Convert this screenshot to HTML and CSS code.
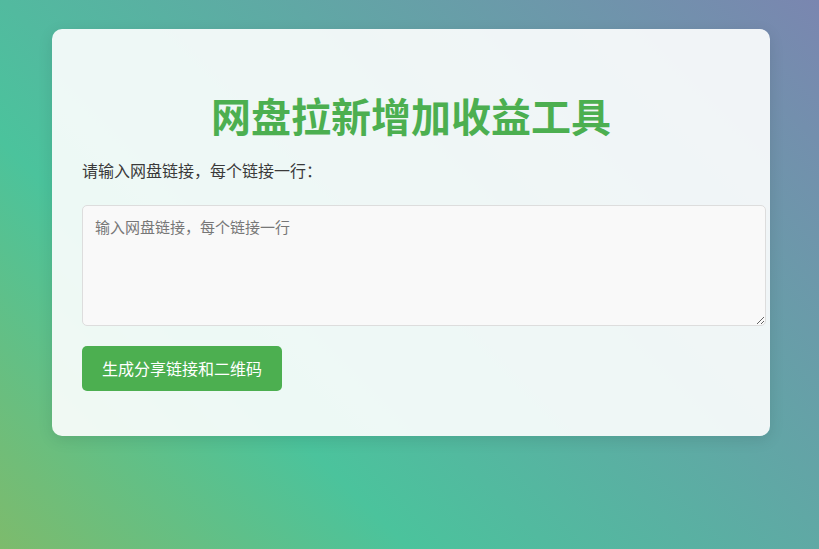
FILE: index.html
```html
<!DOCTYPE html>
<html lang="zh-CN">
<head>
<meta charset="utf-8">
<title>网盘拉新增加收益工具</title>
<link rel="stylesheet" href="styles.css">
</head>
<body>
  <div class="card">
    <h1 class="title">网盘拉新增加收益工具</h1>
    <p class="label">请输入网盘链接，每个链接一行：</p>
    <textarea class="links" placeholder="输入网盘链接，每个链接一行"></textarea>
    <button class="btn" type="button">生成分享链接和二维码</button>
  </div>
</body>
</html>
```

FILE: styles.css
```css
html, body {
  margin: 0;
  padding: 0;
  height: 100%;
}
body {
  font-family: "Noto Sans CJK SC", "Noto Sans", "Liberation Sans", sans-serif;
  background: linear-gradient(45deg, #7dbb6c 0%, #4bc39c 30%, #7a86b0 100%);
  padding: 29px 49px 0 52px;
  box-sizing: border-box;
}
.card {
  background: rgba(255, 255, 255, 0.9);
  border-radius: 10px;
  padding: 30px 30px 45px;
  box-shadow: 0 4px 15px rgba(0, 0, 0, 0.1);
}
.title {
  margin: 27px 0 16px;
  font-size: 40px;
  line-height: 58px;
  font-weight: 700;
  color: #4caf50;
  text-align: center;
}
.label {
  margin: 0;
  font-size: 16px;
  line-height: 21px;
  color: #3a3a3a;
}
.links {
  display: block;
  margin-top: 24px;
  width: 100%;
  height: 95px;
  padding: 12px;
  border: 1px solid #ddd;
  border-radius: 5px;
  background: #f9f9f9;
  font-family: "Noto Sans CJK SC", "Noto Sans", sans-serif;
  font-size: 15px;
  line-height: 18px;
  color: #333;
}
.links::placeholder {
  color: #777;
}
.btn {
  display: block;
  margin-top: 20px;
  padding: 12px 20px;
  border: none;
  border-radius: 5px;
  background: #4caf50;
  color: #fff;
  font-family: "Noto Sans CJK SC", "Noto Sans", sans-serif;
  font-size: 16px;
  line-height: 21px;
  cursor: pointer;
}
```
